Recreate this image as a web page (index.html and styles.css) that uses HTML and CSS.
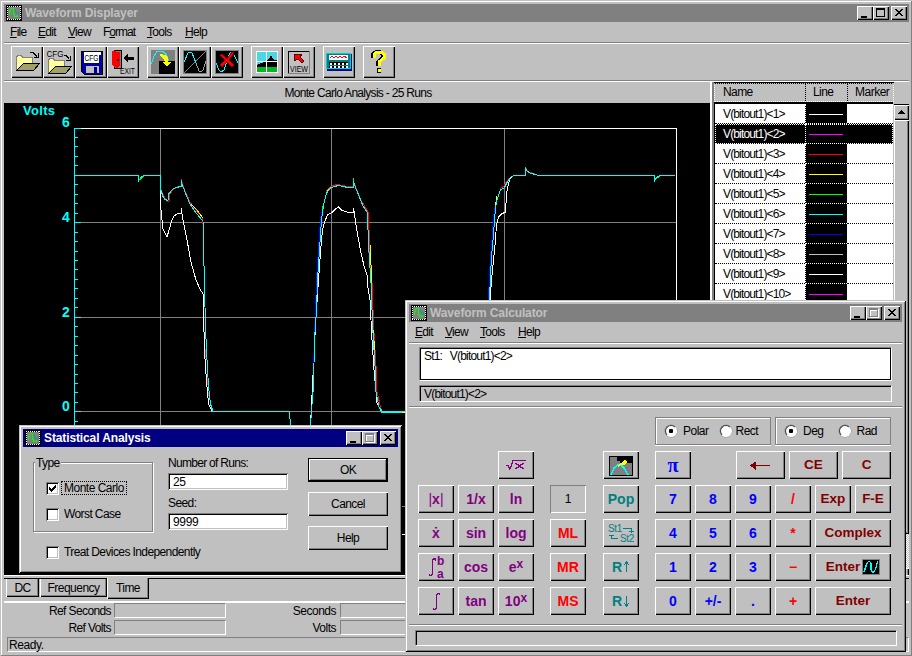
FILE: index.html
```html
<!DOCTYPE html>
<html lang="en">
<head>
<meta charset="utf-8">
<title>Waveform Displayer</title>
<link rel="stylesheet" href="styles.css">
</head>
<body>
<svg class="defs" width="0" height="0">
  <symbol id="app" viewBox="0 0 16 16">
    <rect width="16" height="16" fill="#000"/>
    <path d="M1 1.500h14M1 14.500h14M1.500 1v14M14.500 1v14" stroke="#fff" stroke-dasharray="1 1"/>
    <rect x="2" y="2" width="12" height="12" fill="#808080"/>
    <path fill="#0f0" d="M3 6h1v4H3zM4 4h1v3H4zM5 3h3v1H5zM7 4h1v6H7zM8 9h1v3H8zM9 12h3v-1H9zM11 10h1v1h-1z"/>
    <path fill="#00a0a0" d="M9 5h1v2H9zM10 7h1v2h-1zM12 7h1v3h-1z"/>
  </symbol>
  <symbol id="min" viewBox="0 0 16 14"><path d="M4 10h6v2H4z"/></symbol>
  <symbol id="max" viewBox="0 0 16 14"><path fill-rule="evenodd" d="M3 2h9v9H3zM4 4v6h7V4z"/></symbol>
  <symbol id="maxoff" viewBox="0 0 16 14"><path fill="#fff" fill-rule="evenodd" d="M4 3h9v9H4zM5 5v6h7V5z"/><path fill="#808080" fill-rule="evenodd" d="M3 2h9v9H3zM4 4v6h7V4z"/></symbol>
  <symbol id="close" viewBox="0 0 16 14"><path d="M4 3h2v1h1v1h2V4h1V3h2v1h-1v1h-1v1H9v1h1v1h1v1h1v1h-2V9H9V8H7v1H6v1H4V9h1V8h1V7h1V6H6V5H5V4H4z"/></symbol>
  <symbol id="folder" viewBox="0 0 32 32">
    <path d="M5.500 23.500V11.500l1-2h4l1 2h10v6" fill="#ffff9c" stroke="#808080"/>
    <path d="M5.500 24.500l7-7h16l-6 7z" fill="#a0a068" stroke="#000"/>
  </symbol>
</svg>

<main class="window main">
  <header class="title inactive">
    <svg class="app"><use href="#app"/></svg><h1>Waveform Displayer</h1>
    <span class="ctl"><svg><use href="#min"/></svg></span><span class="ctl"><svg><use href="#max"/></svg></span><span class="ctl x"><svg><use href="#close"/></svg></span>
  </header>
  <nav class="menu">
    <span class="m28"><u>F</u>ile</span><span class="m30"><u>E</u>dit</span><span class="m35"><u>V</u>iew</span><span class="m44">F<u>o</u>rmat</span><span class="m38"><u>T</u>ools</span><span><u>H</u>elp</span>
  </nav>
  <div class="toolbar">
    <div class="tools">
      <button class="tool"><svg><use href="#folder" width="32" height="32"/><path d="M19 6.500h3l4 4M27.500 7v5M23 11.500h5M25.500 9v3" fill="none" stroke="#000"/></svg></button>
      <button class="tool"><svg><use href="#folder" y="3" width="32" height="32"/><path d="M21 9.500h2l3 3M27.500 10v5M23 14.500h5" fill="none" stroke="#000"/><text x="3.500" y="10.500" class="tiny" textLength="17" lengthAdjust="spacingAndGlyphs">CFG</text></svg></button>
      <button class="tool"><svg><path d="M6 5h21v23H9l-3-3z" fill="#0000a0" stroke="#000"/><path d="M9 6h15v11H9z" fill="#fff"/><path d="M24 6h2v3h-2z" fill="#fff"/><path d="M11 20h13v7H11z" fill="#c0c0c0"/><path d="M19 21h3v6h-3z" fill="#000080"/><text x="9.500" y="15" class="tiny" textLength="14" lengthAdjust="spacingAndGlyphs">CFG</text></svg></button>
      <button class="tool"><svg><path d="M7 4h7v18H7z" fill="#808080" stroke="#000"/><path d="M5 5l8 1v14l-3 2-5-3z" fill="#f00"/><path d="M16 12l5-4v3h6v3h-6v3z"/><path d="M10 13h2v2h-2z"/><text x="13" y="27.500" class="tiny" textLength="15" lengthAdjust="spacingAndGlyphs">EXIT</text></svg></button>
    </div>
    <div class="tools">
      <button class="tool"><svg><path d="M4 4h24v24H4z" fill="#808080"/><path d="M12 15h16v13H12z"/><path d="M4.500 18l2-7 3-5 3-1 3 0 4 4 2 6" fill="none" stroke="#0ff"/><path d="M13 8l5 1 3 3v4h3l-4 5-4-5h2l-1-3-4-3z" fill="#ff0"/></svg></button>
      <button class="tool"><svg><path d="M4.500 4.500h23v23h-23z" stroke="#808080"/><path d="M5 27L27 5" stroke="#808080"/><path d="M5 16l4-9 2-1 2 1 4 10" fill="none" stroke="#0ff"/><path d="M17 17l3 8 2 1 2-2 3-9" fill="none" stroke="#a0a0a0"/></svg></button>
      <button class="tool"><svg><path d="M4.500 4.500h23v23h-23z" stroke="#808080"/><path d="M5 17l3 7 2 2 3-2 5-15 2-3 2 1 5 10" fill="none" stroke="#0ff"/><path d="M9 9l2-1 5 5 5-7 2 1-5 7 5 5-2 2-5-5-5 5-2-2 5-5z" fill="#f00" stroke="#900"/></svg></button>
    </div>
    <div class="tools">
      <button class="tool"><svg><path d="M5 5h22v22H5z" fill="#808080"/><path d="M6 6h20v12H6z" fill="#48d8e8"/><path d="M6 19l4-2 4-1 4-3 2-4 3 5h3v7H6z"/><path d="M6 21h20v5H6z" fill="#00b820"/><path d="M5.500 5.500h21v21h-21zM15.500 5v22M5 15.500h22" fill="none" stroke="#fff" stroke-width="1.500"/></svg></button>
      <button class="tool"><svg><path d="M5.500 27V5.500H26" fill="none" stroke="#000"/><path d="M26.500 5v22H5" fill="none" stroke="#808080"/><path d="M11 8h8l-2 3 4 4-2 2-4-4-4 2z" fill="#f00" stroke="#500"/><text x="7" y="25.500" class="tiny" textLength="18" lengthAdjust="spacingAndGlyphs">VIEW</text></svg></button>
    </div>
    <div class="tools">
      <button class="tool"><svg><path d="M4 8h25v17H4z" fill="#000080"/><path d="M3.500 7.500h24v15h-24z" fill="#008080" stroke="#0cc"/><path d="M6 9h19v5H6z" fill="#fff"/><path d="M7 12l2-2 2 2 2-2 2 2 2-2 2 2 2-2 3 2" fill="none" stroke="#f00"/><path d="M6 17.500h19M6 21h19" stroke="#000" stroke-width="2.500"/><path d="M7 17.500h18M7 21h18" stroke="#fff" stroke-width="2" stroke-dasharray="2 2"/></svg></button>
    </div>
    <div class="tools">
      <button class="tool"><svg><path d="M11 12V8l3-2h4l3 2v4l-5 4v4" fill="none" stroke="#000" stroke-width="4" transform="translate(-1 0)"/><path d="M14 22h4v5h-4z"/><path d="M11 12V8l3-2h4l3 2v4l-5 4v4" fill="none" stroke="#ff0" stroke-width="3"/><path d="M15 23h3v3h-3z" fill="#ff0"/></svg></button>
    </div>
  </div>

  <div class="work">
    <section class="chart">
      <h2>Monte Carlo Analysis - 25 Runs</h2>
      <svg class="plot" viewBox="4 103 706 472">
        <rect x="4" y="103" width="706" height="472"/>
        <g fill="#808080"><path d="M160 129h1v405h-1zM331 129h1v405h-1zM504 129h1v405h-1z"/><path d="M75 222h601v1H75zM75 317h601v1H75zM75 411h601v1H75zM75 506h601v1H75z"/></g>
        <path d="M75 128.500H676.500V534.500H75" fill="none" stroke="#fff"/>
        <path d="M74.500 128V534M75 128.500h6M75 222.500h6M75 317.500h6M75 411.500h6M75 137.500h3M75 146.500h3M75 156.500h3M75 165.500h3M75 175.500h3M75 184.500h3M75 194.500h3M75 203.500h3M75 213.500h3M75 232.500h3M75 241.500h3M75 251.500h3M75 260.500h3M75 269.500h3M75 279.500h3M75 288.500h3M75 298.500h3M75 307.500h3M75 326.500h3M75 336.500h3M75 345.500h3M75 355.500h3M75 364.500h3M75 374.500h3M75 383.500h3M75 392.500h3M75 402.500h3M75 421.500h3" fill="none" stroke="#0ff"/>
        <g fill="none">
          <path stroke="#fff" d="M160.500 181l.5 29 2 19 4 8 2-7 3-10 2-4 3-2 4-1V208l2 12 4 20 4 22 5 18 4 9 3 5 .5 17 1 40 2 30 2 23 4 8M310.500 425l2-40 3-60 3-45 2-28 2-22 2-8 3-7 5-3 3-3 3-2 3 3 5 2 7 .500V208l2.500 17 4 23 4 18 3 9 1 13 2 12 2 40 2 30 3 33 4 8M490 300l2-25 3-30 1.500-20 2-8 3-3 4-2 1-17 1-7 2-8 3-4"/>
          <path stroke="#f00" d="M161 190l3 6 3 5 2 0 1-7 3-4 4-3 4-.5V179l1.500 5 3 8 5 11 6 8 6.500 7M202.500 218v6M203.500 241v4M204.500 283v3M205.500 326v8M205.800 349v9M207 377v8M208.500 392v4M326 191.500l5-5 6-2 8 1.500h8V180l3 8 5 12 7 12 1 18 1 22 2 31 1 27 1 23 2 33 1 26 4 17M500 189l4-3 3-5 4-4M525.500 168l3 4 6 2"/>
          <path stroke="#00f" d="M313.500 370l1-30 1-30 1-30 2-30 2-30 3-15M488.500 300l1-25 2-30 3-37"/>
          <path stroke="#ff0" d="M191 204l6 6 6 8M370.500 245l1 38M373.500 330l1 20M327 191l3-3M495 208l2-12"/>
          <path stroke="#f0f" d="M368.500 235v18"/>
          <path stroke="#0f0" d="M139.500 180l4-4M353.500 178v3M322.500 206v10M525.500 167v4M656 179l5-4"/>
          <path stroke="#0ff" d="M75 175.500h63.500V182M140 178l4-2.500h16.500l.5 15 2 6 2 3 3 1 1-7 4-4.500 3-1.500 5-1V180l1 4 3 8 5 12 6 9 7 8 .5 24 1 41 1 41 1 24 2 35 2 18 2 6 1 1.500M289.500 411.500l1 14M310.500 425l1-14 2-25 1-46 2-30 1-30 2-30 2-30 2-15 3-12 4-5 4-1.500 4-1 7 1.500h8V181l1 4 4.500 11 4 10 4 6 1 18 1 22 2 31 1 27 1 23 2 33 1 26 3 15 3 4M489.500 300l1-25 1-18 2-23 2-26 2-10 3-8 4-2.500 3-6 3-4 3-2h11.500V168l2 3 3 2 7 2 6 .5h111V182l2-4 4-2.500h15"/>
        </g>
        <path d="M211 411h79v1h-79zM381 411h25v2h-25z" fill="#0ff"/><path d="M402 412h4v1h-4z" fill="#ff0"/>
        <text x="23" y="115" class="volts" textLength="32">Volts</text>
        <g class="axis"><text x="62" y="127">6</text><text x="62" y="222">4</text><text x="62" y="317">2</text><text x="62" y="411">0</text></g>
      </svg>
    </section>
    <aside class="side">
      <div class="legend">
        <div class="lhead"><span>Name</span><span>Line</span><span>Marker</span></div>
        <div class="lrows">
          <div class="lrow"><span>V(bitout1)&lt;1&gt;</span><i><s class="white"></s></i><b></b></div>
          <div class="lrow sel"><span>V(bitout1)&lt;2&gt;</span><i><s class="magenta"></s></i><b></b></div>
          <div class="lrow"><span>V(bitout1)&lt;3&gt;</span><i><s class="red"></s></i><b></b></div>
          <div class="lrow"><span>V(bitout1)&lt;4&gt;</span><i><s class="yellow"></s></i><b></b></div>
          <div class="lrow"><span>V(bitout1)&lt;5&gt;</span><i><s class="lime"></s></i><b></b></div>
          <div class="lrow"><span>V(bitout1)&lt;6&gt;</span><i><s class="cyan"></s></i><b></b></div>
          <div class="lrow"><span>V(bitout1)&lt;7&gt;</span><i><s class="pure-blue"></s></i><b></b></div>
          <div class="lrow"><span>V(bitout1)&lt;8&gt;</span><i><s class="silver"></s></i><b></b></div>
          <div class="lrow"><span>V(bitout1)&lt;9&gt;</span><i><s class="white"></s></i><b></b></div>
          <div class="lrow"><span>V(bitout1)&lt;10&gt;</span><i><s class="magenta"></s></i><b></b></div>
        </div>
      </div>
      <div class="scroll"><div class="up"><svg viewBox="0 0 15 15"><path d="M7 5h1v1h1v1h1v1h1v1H4V8h1V7h1V6h1z"/></svg></div><div class="thumb"></div><div class="track"></div><div class="down"></div></div>
    </aside>
  </div>
  <div class="tabs"><span class="tab dc">DC</span><span class="tab fq">Frequency</span><span class="tab time">Time</span></div>
  <div class="readout"><label>Ref Seconds</label><div class="cell"></div><label class="l2">Seconds</label><div class="cell wide"></div></div>
  <div class="readout"><label>Ref Volts</label><div class="cell"></div><label class="l2">Volts</label><div class="cell wide"></div></div>
  <footer class="ready">Ready.</footer>
</main>

<section class="window dialog">
  <header class="title active">
    <svg class="app"><use href="#app"/></svg><h1>Statistical Analysis</h1>
    <span class="ctl"><svg><use href="#min"/></svg></span><span class="ctl"><svg><use href="#maxoff"/></svg></span><span class="ctl x"><svg><use href="#close"/></svg></span>
  </header>
  <div class="dbody">
    <div class="left">
      <div class="group"><div class="legend-text">Type</div>
        <div class="check"><span class="box"><svg viewBox="0 0 13 13"><path d="M3 5h1v1h1v1h1V6h1V5h1V4h1V3h1v3H9v1H8v1H7v1H6v1H5V9H4V8H3z"/></svg></span><em>Monte Carlo</em></div>
        <div class="check"><span class="box"></span><span class="lab">Worst Case</span></div>
      </div>
      <div class="check treat"><span class="box"></span><span class="lab">Treat Devices Independently</span></div>
    </div>
    <div class="mid"><label>Number of Runs:</label><div class="input">25</div><label>Seed:</label><div class="input">9999</div></div>
    <div class="acts"><button class="btn ok">OK</button><button class="btn">Cancel</button><button class="btn">Help</button></div>
  </div>
</section>

<section class="window calc">
  <header class="title inactive">
    <svg class="app"><use href="#app"/></svg><h1>Waveform Calculator</h1>
    <span class="ctl"><svg><use href="#min"/></svg></span><span class="ctl"><svg><use href="#maxoff"/></svg></span><span class="ctl x"><svg><use href="#close"/></svg></span>
  </header>
  <nav class="menu">
    <span class="m30"><u>E</u>dit</span><span class="m35"><u>V</u>iew</span><span class="m38"><u>T</u>ools</span><span><u>H</u>elp</span>
  </nav>
  <div class="display">
    <div class="stack">St1:&nbsp;&nbsp; V(bitout1)&lt;2&gt;</div>
    <div class="entry">V(bitout1)&lt;2&gt;</div>
  </div>
  <div class="pad">
    <div class="keys fn">
      <button class="c3"><svg viewBox="0 0 36 28"><path d="M8 14.500h2l2 4 3-9h13" fill="none" stroke="currentColor"/><path d="M17.500 12l8 6M25.500 12l-8 6" stroke="currentColor" stroke-width="1.500"/></svg></button>
      <button class="thin"><span>|</span>x<span>|</span></button><button>1/x</button><button>ln</button>
      <button>ẋ</button><button>sin</button><button>log</button>
      <button><svg viewBox="0 0 36 28"><path d="M17.500 7.500v-1l-1-1h-1l-1 2v13l-1 2h-2v-2" fill="none" stroke="currentColor" stroke-width="1.500"/><text x="19" y="12">b</text><text x="19" y="25">a</text></svg></button><button>cos</button><button>e<sup>x</sup></button>
      <button><svg viewBox="0 0 36 28"><path d="M21.500 8V6.500h-2l-1 2v12l-1 2h-2V21" fill="none" stroke="currentColor" stroke-width="1.500"/></svg></button><button>tan</button><button>10<sup>x</sup></button>
    </div>
    <div class="keys mem"><button class="one">1</button><button>ML</button><button>MR</button><button>MS</button></div>
    <div class="keys stk">
      <button><svg viewBox="0 0 36 28"><path d="M6.500 5.500h23v19h-23z" fill="#808080" stroke="#000"/><path d="M14 6h15v6H17v-2h-3z" fill="#000"/><path d="M8 24l3-7 4-3h3l3 3 4 7" fill="none" stroke="#0ff" stroke-width="1.500"/><path d="M14 15l4-3 3-3 1-1 2 3-3 3h-3l-3 2z" fill="#ff0"/></svg></button>
      <button>Pop</button>
      <button><svg viewBox="0 0 36 28"><text x="5" y="13" class="st">St1</text><text x="17" y="23" class="st">St2</text><path d="M20 9.500h8.500V14M26 12.500h5M15 19.500H8.500V16M6 16.500h5" fill="none" stroke="currentColor" stroke-width="1.300"/></svg></button>
      <button>R<svg class="arr" viewBox="0 0 7 12"><path d="M3.500 11V1M1 4l2.500-3L6 4" fill="none" stroke="currentColor"/></svg></button><button>R<svg class="arr" viewBox="0 0 7 12"><path d="M3.500 1v10M1 8l2.500 3L6 8" fill="none" stroke="currentColor"/></svg></button>
    </div>
    <div class="num">
      <div class="row"><div class="radios"><span class="radio on"></span>Polar<span class="radio"></span>Rect</div><div class="radios"><span class="radio on"></span>Deg<span class="radio deg"></span>Rad</div></div>
      <div class="row"><button class="blue pi">π</button><span class="gap"></span><button class="w49 maroon"><svg viewBox="0 0 49 28"><path d="M15 14.500h19M15 14.500l4-3v6z" fill="currentColor" stroke="currentColor"/></svg></button><button class="w49 maroon">CE</button><button class="w49 maroon">C</button></div>
      <div class="row"><button class="blue">7</button><button class="blue">8</button><button class="blue">9</button><button class="redk">/</button><button class="maroon">Exp</button><button class="maroon">F-E</button></div>
      <div class="row"><button class="blue">4</button><button class="blue">5</button><button class="blue">6</button><button class="redk">*</button><button class="w76 maroon">Complex</button></div>
      <div class="row"><button class="blue">1</button><button class="blue">2</button><button class="blue">3</button><button class="redk">−</button><button class="w76 maroon">Enter<svg class="wave" viewBox="0 0 18 16"><path d="M.5.500h17v15H.5z" stroke="#808080"/><path d="M2 13l1-3 2-6 2-2 2 2v7l1 2h2l2-4 1-5 1-2" fill="none" stroke="#0ff" stroke-width="1.300"/></svg></button></div>
      <div class="row"><button class="blue">0</button><button class="blue">+/-</button><button class="blue">.</button><button class="redk">+</button><button class="w76 maroon">Enter</button></div>
    </div>
  </div>
  <div class="calcfoot"><div></div></div>
</section>
</body>
</html>
```
FILE: styles.css
```css
* { box-sizing: border-box; }
body {
  margin: 0;
  width: 912px;
  height: 656px;
  overflow: hidden;
  position: relative;
  background: #c0c0c0;
  color: #000;
  font: 12px/14px "Liberation Sans", Arial, sans-serif;
  letter-spacing: -0.6px;
}
h1, h2 { margin: 0; font-weight: normal; font-size: 12px; }
button { font: inherit; letter-spacing: inherit; padding: 0; border: 0; border-radius: 0; color: inherit; background: #c0c0c0; }
svg { display: block; shape-rendering: crispEdges; }
.defs { position: absolute; }

/* Window frames */
.window {
  position: absolute;
  background: #c0c0c0;
  padding: 4px;
  box-shadow: inset 1px 1px #c0c0c0, inset -1px -1px #000, inset 2px 2px #fff, inset -2px -2px #808080;
}
.main { left: 0; top: 0; width: 912px; height: 656px; padding-right: 3px; box-shadow: inset 1px 1px #c0c0c0, inset -1px -1px #808080, inset 2px 2px #fff; display: flex; flex-direction: column; }
.dialog { left: 19px; top: 425px; width: 383px; height: 148px; }
.calc { left: 405px; top: 300px; width: 501px; height: 352px; }

.title { display: flex; align-items: center; height: 18px; padding: 0 2px; flex: none; }
.title h1 { flex: 1; font-weight: bold; letter-spacing: -0.12px; padding-left: 3px; }
.inactive { background: #808080; color: #c0c0c0; }
.active { background: #000080; color: #fff; }
.app { width: 16px; height: 16px; flex: none; }
.ctl { width: 16px; height: 14px; background: #c0c0c0; box-shadow: inset 1px 1px #fff, inset -1px -1px #000, inset -2px -2px #808080; }
.ctl svg { width: 16px; height: 14px; }
.x { margin-left: 2px; }

.menu { display: flex; align-items: center; height: 22px; padding: 0 6px 2px; flex: none; border-bottom: 1px solid #fff; box-shadow: inset 0 -1px #808080; letter-spacing: -0.7px; }
.m28 { width: 28px; } .m30 { width: 30px; } .m35 { width: 35px; } .m44 { width: 44px; letter-spacing: -1px; } .m38 { width: 38px; }
u { text-decoration: underline; text-underline-offset: 1px; text-decoration-thickness: 1px; }

/* Toolbar */
.toolbar { display: flex; gap: 8px; height: 38px; padding: 2px 7px; flex: none; border-bottom: 1px solid #fff; box-shadow: inset 0 -1px #808080; }
.tools { display: flex; }
.tool { width: 32px; height: 32px; box-shadow: inset 1px 1px #fff, inset -1px -1px #000, inset -2px -2px #808080; }
.tool svg { width: 32px; height: 32px; }
.tiny { font-size: 9px; letter-spacing: 0; }

/* Chart and legend */
.work { display: flex; height: 493px; flex: none; }
.chart { width: 706px; }
.chart h2 { height: 21px; line-height: 23px; text-align: center; letter-spacing: -0.7px; padding-left: 2px; }
.plot { width: 706px; height: 472px; }
.volts { fill: #0ff; font: bold 13px "Liberation Sans", sans-serif; letter-spacing: 0; }
.axis { fill: #0ff; font: bold 14px "Liberation Sans", sans-serif; letter-spacing: 0; }
.side { width: 199px; display: flex; padding-left: 4px; box-shadow: inset 2px 0 #fff, inset 4px 0 #808080; padding-top: 1px; }
.legend { width: 180px; height: 492px; background: #fff; border-right: 1px solid #c0c0c0; }
.lhead { display: flex; height: 19px; width: 180px; background: #c0c0c0; line-height: 16px; border: 1px dotted #fff; border-top-color: #000; box-shadow: 0 -1px #000; }
.lhead span { padding-left: 8px; }
.lhead span:nth-child(1) { width: 91px; border-right: 1px dotted #000; }
.lhead span:nth-child(2) { width: 42px; border-right: 1px dotted #000; padding-left: 7px; }
.lhead span:nth-child(3) { padding-left: 7px; letter-spacing: -0.5px; }
.lrows { border-top: 2px solid #000; border-left: 1px solid #000; }
.lrow { display: flex; height: 20px; line-height: 21px; }
.lrow span { width: 90px; padding-left: 8px; border-bottom: 1px dotted #000; letter-spacing: -0.85px; }
.lrow i { width: 42px; background: #000; padding: 10px 4px 0 3px; border-bottom: 1px dotted #fff; border-left: 1px dotted #fff; height: 20px; }
.lrow s { display: block; height: 1px; width: 34px; }
.lrow b { width: 46px; border-bottom: 1px dotted #000; }
.sel { background: #000; color: #fff; outline: 1px dotted #fff; outline-offset: -1px; }
.white { background: #fff; } .magenta { background: #f0f; } .red { background: #f00; } .yellow { background: #ff0; } .lime { background: #0f0; } .cyan { background: #0ff; } .pure-blue { background: #00f; } .silver { background: #c0c0c0; }
.scroll { width: 15px; padding-top: 20px; border-top: 1px solid #c0c0c0; }
.up, .thumb, .down { background: #c0c0c0; box-shadow: inset 1px 1px #fff, inset -1px -1px #000, inset -2px -2px #808080; }
.up { height: 16px; border-top: 1px solid #000; }
.up svg { width: 15px; height: 15px; }
.thumb { height: 414px; }
.track { height: 34px; background: conic-gradient(#fff 25%, #c0c0c0 0 50%, #fff 0 75%, #c0c0c0 0) 0 0 / 2px 2px; }
.down { height: 16px; }

/* Tabs and readouts */
.tabs { display: flex; height: 28px; flex: none; background: linear-gradient(#fff 1px, #c0c0c0 1px 3px, #000 3px 4px, #c0c0c0 4px); border-bottom: 2px solid; border-image: linear-gradient(#808080 50%, #fff 50%) 2; padding: 3px 0 0 2px; align-items: flex-start; text-align: center; }
.tab { height: 19px; background: #c0c0c0; box-shadow: inset 1px 0 #fff, inset -1px -1px #000, inset -2px -2px #808080; border-top: 1px solid #000; line-height: 18px; }
.dc { width: 33px; } .fq { width: 67px; margin-left: 1px; letter-spacing: -0.5px; }
.time { height: 22px; width: 42px; margin-top: -1px; border-top-color: #c0c0c0; line-height: 20px; }
.readout { display: flex; height: 15px; margin-bottom: 2px; flex: none; line-height: 16px; letter-spacing: -0.6px; }
.readout label { width: 107px; text-align: right; margin-right: 3px; }
.readout .l2 { width: 110px; margin-right: 4px; letter-spacing: -0.5px; }
.cell { width: 112px; border: 1px solid; border-color: #808080 #fff #fff #808080; }
.wide { width: 200px; }
.ready { height: 15px; margin-left: 3px; line-height: 14px; padding-left: 1px; border: 1px solid; border-color: #808080 #fff #fff #808080; letter-spacing: -0.4px; }

/* Statistical analysis dialog */
.dbody { display: flex; padding: 9px 10px 0; }
.left { width: 135px; white-space: nowrap; }
.group { padding-left: 13px; width: 120px; height: 76px; position: relative; }
.group::before { content: ""; position: absolute; inset: 6px 0 0 0; border: 1px solid #808080; box-shadow: 1px 1px #fff, inset 1px 1px #fff; }
.group .check + .check { margin-top: 8px; }
.legend-text { width: 26px; padding: 0 1px; margin: 0 0 10px -11px; background: #c0c0c0; position: relative; height: 13px; line-height: 14px; }
.check { display: flex; align-items: center; height: 18px; position: relative; }
.box { flex: none; width: 13px; height: 13px; background: #fff; box-shadow: inset 1px 1px #808080, inset -1px -1px #fff, inset 2px 2px #000, inset -2px -2px #c0c0c0; }
.check em { font-style: normal; margin-left: 2px; padding: 0 2px; border: 1px dotted #000; line-height: 12px; letter-spacing: -0.5px; }
.lab { margin-left: 5px; }
.treat { margin: 11px 0 0 13px; }
.mid { width: 120px; }
.mid label { display: block; height: 17px; line-height: 14px; }
.mid label:nth-of-type(1) { letter-spacing: -0.7px; }
.input { height: 17px; margin-bottom: 6px; background: #fff; padding-left: 5px; line-height: 18px; letter-spacing: -0.3px; box-shadow: inset 1px 1px #808080, inset -1px -1px #fff, inset 2px 2px #000, inset -2px -2px #c0c0c0; }
.mid label:nth-of-type(2) { line-height: 15px; }
.acts { margin: 2px 0 0 20px; display: flex; flex-direction: column; gap: 10px; }
.btn { width: 80px; height: 24px; box-shadow: inset 1px 1px #fff, inset -1px -1px #000, inset -2px -2px #808080; }
.ok { box-shadow: inset 1px 1px #000, inset -2px -2px #000, inset 2px 2px #fff, inset -3px -3px #808080; }

/* Calculator */
.display { height: 64px; padding: 3px 10px 0; border-bottom: 1px solid #fff; box-shadow: inset 0 -1px #808080; letter-spacing: -0.8px; }
.stack { height: 34px; background: #fff; padding: 1px 4px; border: 1px solid; border-color: #808080 #fff #fff #808080; box-shadow: inset 0 0 0 1px #000; }
.entry { height: 17px; margin-top: 4px; padding-left: 4px; line-height: 16px; border: 1px solid; border-color: #808080 #fff #fff #808080; box-shadow: inset 1px 1px #000; }
.pad { display: flex; padding: 9px 9px 0; height: 216px; font-weight: bold; font-size: 14px; letter-spacing: 0; }
.keys { display: grid; grid-auto-rows: 28px; gap: 6px 4px; align-content: start; padding-top: 34px; }
.fn { grid-template-columns: repeat(3, 36px); color: #800080; }
.mem { margin-left: 16px; color: #f00; width: 36px; padding-top: 68px; }
.stk { margin-left: 17px; color: #008080; width: 36px; }
.num { margin-left: 16px; display: flex; flex-direction: column; gap: 6px; }
.row { display: flex; gap: 4px; height: 28px; }
.pad button { width: 36px; height: 28px; display: flex; align-items: center; justify-content: center; box-shadow: inset 1px 1px #fff, inset -1px -1px #000, inset -2px -2px #808080; }
.pad button svg { width: 36px; height: 28px; }
.c3 { grid-column: 3; }
.pad .w49 { width: 49px; } .pad .w49 svg { width: 49px; }
.pad .w76 { width: 76px; }
.gap { width: 37px; }
.pad .one { color: #000; font-weight: normal; font-size: 12px; box-shadow: inset 1px 1px #808080, inset -1px -1px #fff; }
.thin span { font-weight: normal; }
.pad sup { font-size: 12px; line-height: 8px; vertical-align: 0; align-self: flex-start; margin-top: 7px; }
.pad svg text { fill: currentColor; font-size: 12px; }
.pad svg .st { font-size: 10px; font-weight: normal; letter-spacing: -0.4px; }
.pad button .arr { width: 7px; height: 12px; margin-left: 1px; }
.pad button .wave { width: 18px; height: 16px; margin-left: 2px; }
.num .blue { color: #00f; } .redk { color: #f00; } .maroon { color: #800000; }
.num .maroon { font-size: 13.500px; }
.num .pi { font-family: "Liberation Serif", serif; font-size: 20px; }
.radios { width: 116px; display: flex; align-items: center; padding-left: 9px; font-weight: normal; font-size: 12px; letter-spacing: -0.5px; border: 1px solid #808080; box-shadow: inset 1px 1px #fff, inset -1px -1px #c0c0c0, 0 1px #fff; }
.radio { width: 12px; height: 12px; border-radius: 50%; background: #fff; border: 1px solid; border-color: #404040 #fff #fff #404040; margin-right: 6px; box-shadow: 0 0 0 .5px #909090; }
.radios .radio:nth-of-type(2) { margin-left: 11px; margin-right: 4px; }
.radios .deg:nth-of-type(2) { margin-left: 15px; margin-right: 6px; }
.on { background: radial-gradient(circle, #000 2px, #fff 2.5px); }
.calcfoot { border-top: 1px solid #808080; box-shadow: inset 0 1px #fff; padding: 5px 5px 0 6px; }
.calcfoot div { height: 16px; border: 1px solid; border-color: #808080 #fff #fff #808080; box-shadow: inset 1px 1px #000; }
```
